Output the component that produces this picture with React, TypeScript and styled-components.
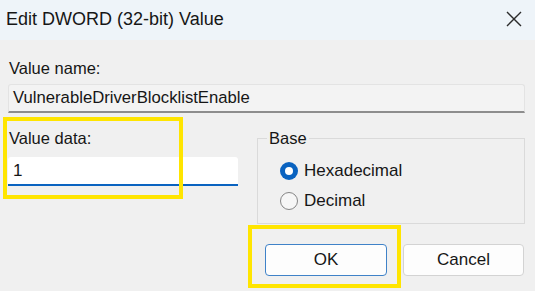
import React from "react";
import styled, { createGlobalStyle } from "styled-components";

const Global = createGlobalStyle`
  html, body { margin: 0; padding: 0; }
  body {
    width: 535px;
    height: 291px;
    overflow: hidden;
    background: #f0f0f0;
    font-family: "Liberation Sans", Arial, sans-serif;
    color: #161616;
  }
`;

const Dialog = styled.div`
  position: relative;
  width: 535px;
  height: 291px;
  background: #f0f0f0;
  display: flex;
  flex-direction: column;
`;

const TitleBar = styled.div`
  height: 40px;
  flex: 0 0 40px;
  background: #eef4f9;
  display: flex;
  align-items: center;
  justify-content: space-between;
  padding: 0 12px 2px 6px;
  box-sizing: border-box;
`;

const Title = styled.div`
  font-size: 18px;
  color: #161616;
`;

const Close = styled.div`
  width: 18px;
  height: 18px;
  display: flex;
  align-items: center;
  justify-content: center;
`;

const Body = styled.div`
  padding: 19px 10px 0 8px;
  display: flex;
  flex-direction: column;
`;

const Label = styled.div`
  font-size: 16.5px;
  line-height: 18px;
  padding-left: 1px;
  color: #161616;
`;

const NameField = styled.div`
  margin-top: 7px;
  height: 29px;
  box-sizing: border-box;
  border: 1px solid #e3e3e3;
  border-bottom: 2px solid #8d8d8d;
  border-radius: 3px 3px 0 0;
  background: #f3f3f3;
  font-size: 16.7px;
  line-height: 26px;
  padding-left: 4px;
  color: #161616;
  white-space: nowrap;
`;

const Row = styled.div`
  margin-top: 16px;
  display: grid;
  grid-template-columns: 230px 268px;
  column-gap: 19px;
  align-items: start;
`;

const Column = styled.div`
  display: flex;
  flex-direction: column;
`;

const DataInput = styled.div`
  margin-top: 10px;
  height: 29px;
  box-sizing: border-box;
  background: #ffffff;
  border-bottom: 2px solid #0a63c0;
  border-radius: 3px 3px 0 0;
  font-size: 17px;
  line-height: 27px;
  padding-left: 5px;
  color: #161616;
`;

const Group = styled.fieldset`
  margin: 0;
  padding: 0 0 9px 9px;
  border: 1px solid #dadada;
  min-width: 0;
`;

const Legend = styled.legend`
  padding: 0 2px;
  font-size: 16.5px;
  line-height: 18px;
  color: #161616;
`;

const Options = styled.div`
  margin-top: 11px;
  padding-left: 13px;
  display: flex;
  flex-direction: column;
  gap: 4px;
`;

const Option = styled.div`
  height: 26px;
  display: flex;
  align-items: center;
  gap: 6px;
  font-size: 17px;
  color: #161616;
`;

const Radio = styled.span<{ $checked?: boolean }>`
  width: 18px;
  height: 18px;
  box-sizing: border-box;
  border-radius: 50%;
  flex: 0 0 18px;
  display: flex;
  align-items: center;
  justify-content: center;
  background: ${(p) => (p.$checked ? "#0a63c0" : "#f6f6f6")};
  border: ${(p) => (p.$checked ? "none" : "1px solid #858585")};
  &::after {
    content: "";
    display: ${(p) => (p.$checked ? "block" : "none")};
    width: 8px;
    height: 8px;
    border-radius: 50%;
    background: #ffffff;
  }
`;

const Buttons = styled.div`
  margin-top: 20px;
  display: flex;
  justify-content: flex-end;
  gap: 16px;
`;

const Button = styled.div<{ $primary?: boolean }>`
  width: ${(p) => (p.$primary ? "122px" : "121px")};
  height: 32px;
  box-sizing: border-box;
  border-radius: 4px;
  background: #fdfdfd;
  border: ${(p) => (p.$primary ? "1.5px solid #3f82c8" : "1px solid #d3d3d3")};
  display: flex;
  align-items: center;
  justify-content: center;
  font-size: 17px;
  color: #161616;
  margin-right: ${(p) => (p.$primary ? "0" : "1px")};
`;

const Highlight = styled.div<{ $x: number; $y: number; $w: number; $h: number }>`
  position: absolute;
  left: ${(p) => p.$x}px;
  top: ${(p) => p.$y}px;
  width: ${(p) => p.$w}px;
  height: ${(p) => p.$h}px;
  box-sizing: border-box;
  border: 4px solid #ffe500;
  pointer-events: none;
`;

export default function App() {
  return (
    <>
      <Global />
      <Dialog>
        <TitleBar>
          <Title>Edit DWORD (32-bit) Value</Title>
          <Close>
            <svg width="16" height="16" viewBox="0 0 16 16">
              <path d="M1 1 L15 15 M15 1 L1 15" stroke="#2b2b2b" strokeWidth="1.4" fill="none" />
            </svg>
          </Close>
        </TitleBar>
        <Body>
          <Label>Value name:</Label>
          <NameField>VulnerableDriverBlocklistEnable</NameField>
          <Row>
            <Column>
              <Label>Value data:</Label>
              <DataInput>1</DataInput>
            </Column>
            <Group>
              <Legend>Base</Legend>
              <Options>
                <Option>
                  <Radio $checked />
                  Hexadecimal
                </Option>
                <Option>
                  <Radio />
                  Decimal
                </Option>
              </Options>
            </Group>
          </Row>
          <Buttons>
            <Button $primary>OK</Button>
            <Button>Cancel</Button>
          </Buttons>
        </Body>
        <Highlight $x={3} $y={117} $w={180} $h={82} />
        <Highlight $x={248} $y={225} $w={153} $h={63} />
      </Dialog>
    </>
  );
}
